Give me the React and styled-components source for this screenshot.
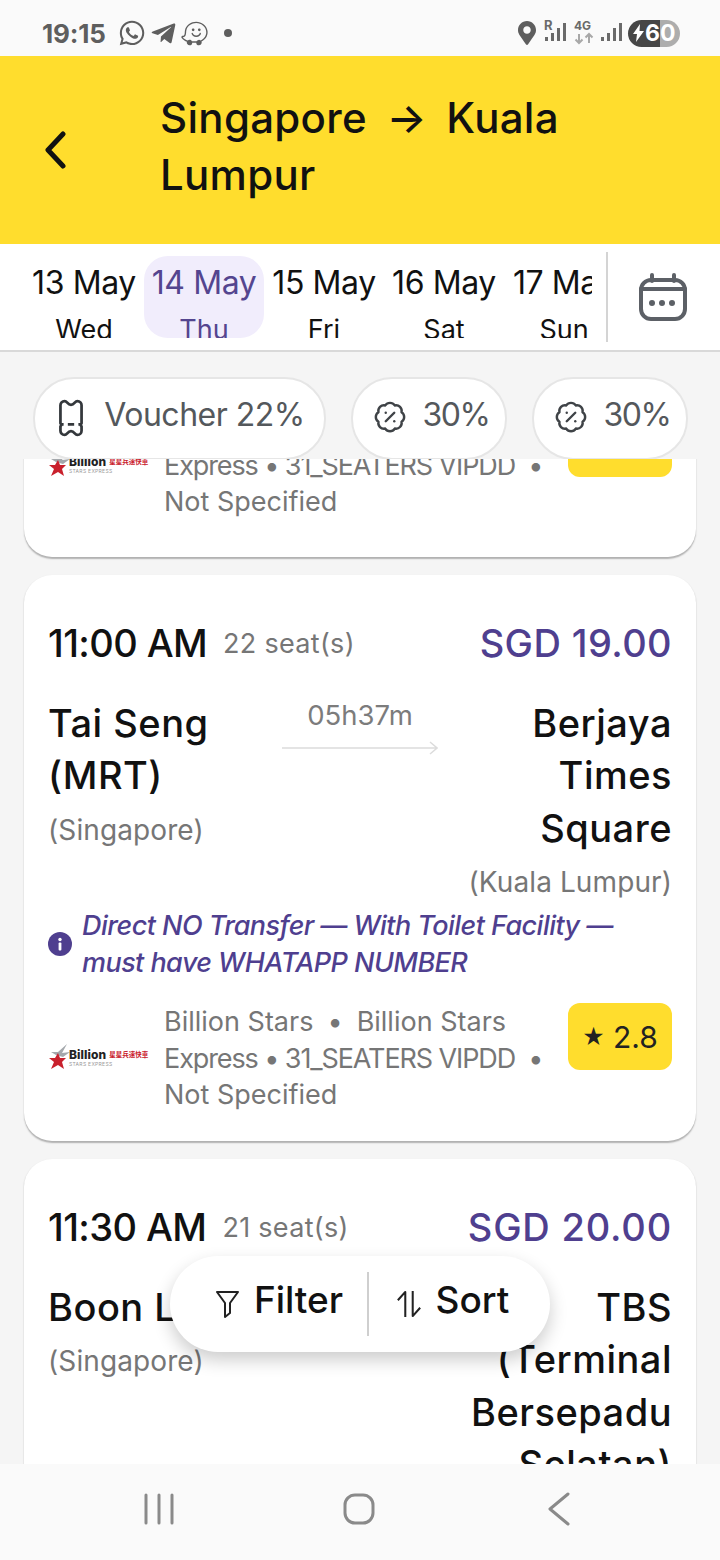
import React from "react";
import styled, { createGlobalStyle } from "styled-components";
import { FaWhatsapp, FaTelegramPlane, FaWaze, FaMapMarkerAlt } from "react-icons/fa";
import { BadgePercent } from "lucide-react";

const Global = createGlobalStyle`
  html, body { margin: 0; padding: 0; background: #f5f5f5; }
  * { box-sizing: border-box; }
  body { font-family: Inter, "Noto Sans", "Noto Sans CJK SC", sans-serif; }
`;

const Screen = styled.div`
  position: relative; width: 720px; height: 1560px; display: flex; flex-direction: column;
  overflow: hidden; background: #f5f5f5;
`;
const StatusBar = styled.div`
  height: 56px; flex: none; background: #fafafa; display: flex; align-items: center;
  justify-content: space-between; padding: 10px 40px 0 42px; color: #5e5e5e;
`;
const StatusGroup = styled.div`display: flex; align-items: center; gap: ${p => p.$gap || 4}px;`;
const Clock = styled.span`font-size: 26px; font-weight: 700; margin-right: 8px; letter-spacing: -0.2px;`;
const Dot = styled.span`width: 8px; height: 8px; border-radius: 50%; background: #5e5e5e; margin-left: 12px;`;
const Signal = styled.div`position: relative; width: ${p => p.$w || 24}px; height: 28px;`;
const SignalLabel = styled.span`
  position: absolute; left: ${p => p.$left}px; top: ${p => p.$top}px; font-size: ${p => p.$size}px; font-weight: 700;
  line-height: 1; color: #6a6a6a;
`;
const Battery = styled.div`
  width: 52px; height: 27px; border-radius: 14px; display: flex; align-items: center;
  padding-left: 5px; gap: 1px; color: #fff; font-size: 23px; font-weight: 700;
  background: linear-gradient(90deg, #464646 0 32px, #adadad 32px 100%);
`;

const Header = styled.header`
  height: 188px; flex: none; background: #ffdd2d; display: flex; align-items: center; padding: 0 40px 0 45px;
`;
const Back = styled.svg`width: 22px; height: 38px; flex: none; margin-right: 93px;`;
const Title = styled.h1`
  margin: 0 0 9px; font-size: 42px; line-height: 57px; font-weight: 500; color: #111; letter-spacing: 0.3px;
  word-spacing: 8px; width: 460px;
`;

const DateStrip = styled.div`
  height: 108px; flex: none; background: #fff; border-bottom: 2px solid #d9d9d9; display: flex; padding-left: 24px;
`;
const DateScroll = styled.div`width: 568px; display: flex; overflow: hidden; padding-top: 12px; height: 94px; flex: none;`;
const DateItem = styled.div`
  width: 120px; height: 82px; flex: none; overflow: hidden; border-radius: 24px; text-align: center;
  background: ${p => (p.$active ? "#f1edfc" : "transparent")};
  color: ${p => (p.$active ? "#54458f" : "#111")}; white-space: nowrap; padding-top: 7px;
`;
const DateNum = styled.div`font-size: 32px; line-height: 40px; letter-spacing: -0.4px;`;
const DateDay = styled.div`font-size: 27px; line-height: 30px; margin-top: 12px;`;
const Divider = styled.div`width: 2px; height: 90px; background: #d4d4d4; margin: 8px 0 0 14px;`;
const CalendarWrap = styled.div`flex: 1; display: flex; align-items: center; justify-content: center; padding-right: 2px;`;

const ChipRow = styled.div`
  height: 107px; flex: none; display: flex; gap: 25px; padding: 25px 0 0 33px; background: #f5f5f5;
`;
const Chip = styled.div`
  height: 83px; width: ${p => p.$w}px; flex: none; border-radius: 41px; background: #fff; border: 2px solid #e6e6e6;
  display: flex; align-items: center; justify-content: center; gap: ${p => p.$gap}px; color: #54585c;
  font-size: 32px; padding: 0 0 9px 4px; white-space: nowrap; letter-spacing: ${p => p.$spacing}px;
`;

const List = styled.div`flex: 1; min-height: 0; overflow: hidden; padding: 0 24px; display: flex; flex-direction: column; gap: 18px;`;
const Card = styled.article`
  flex: none; background: #fff; border-radius: 28px; padding: ${p => (p.$partial ? "40px 24px 36px" : "40px 24px 27px")};
  margin-top: ${p => (p.$partial ? "-89px" : "0")}; box-shadow: 0 1.5px 1.5px rgba(0,0,0,.28);
`;
const TimeRow = styled.div`display: flex; align-items: center; height: 56px; line-height: 56px;`;
const Time = styled.span`font-size: 38px; font-weight: 500; color: #111; letter-spacing: -0.6px;`;
const Seats = styled.span`font-size: 27px; color: #767676; margin: 3px 0 0 16px; letter-spacing: 0.3px;`;
const Price = styled.span`margin-left: auto; font-size: 38px; font-weight: 500; color: #4f3f8f; letter-spacing: ${p => p.$spacing}px;`;
const Route = styled.div`display: grid; grid-template-columns: 1fr 156px 1fr; margin-top: 26px;`;
const Stop = styled.div`text-align: ${p => (p.$right ? "right" : "left")}; display: flex; flex-direction: column; align-items: ${p => (p.$right ? "flex-end" : "flex-start")};`;
const StopName = styled.div`font-size: 38px; line-height: 52.5px; font-weight: 500; color: #111; max-width: ${p => p.$max}px; letter-spacing: 0.5px;`;
const StopCity = styled.div`font-size: 28px; line-height: 40px; color: #767676; margin-top: 8px; white-space: nowrap; letter-spacing: 0.1px;`;
const Middle = styled.div`display: flex; flex-direction: column; align-items: center; color: #7c7c7c; font-size: 27.5px;`;
const Duration = styled.div`line-height: 37px; height: 37px;`;
const Arrow = styled.svg`width: 156px; height: 16px; margin-top: 6px;`;
const Note = styled.div`display: flex; align-items: center; gap: 10px; margin: 5px 0 22px 0;`;
const InfoIcon = styled.svg`width: 24px; height: 24px; flex: none;`;
const NoteText = styled.div`font-size: 27px; line-height: 37px; font-style: italic; font-weight: 500; color: #4f3f8f; width: 560px; letter-spacing: -0.55px;`;
const Operator = styled.div`display: flex; align-items: flex-start;`;
const LogoBox = styled.div`width: 100px; height: 110px; flex: none; margin-right: 16px; display: flex; align-items: center;`;
const OperatorText = styled.div`flex: 1; min-width: 0; padding-top: 1px; font-size: 27px; line-height: 36.5px; color: #767676; white-space: nowrap;`;
const Sep = styled.span`margin: 0 14px;`;
const TightLine = styled.span`letter-spacing: -1.1px;`;
const Rating = styled.div`
  width: 104px; height: 67px; border-radius: 12px; background: #ffdd2d; flex: none; display: flex; align-items: center;
  justify-content: center; gap: 8px; font-size: 30px; color: #222;
`;
const RatingStar = styled.span`font-size: 22px;`;

const Pill = styled.div`
  position: absolute; left: 170px; top: 1256px; width: 380px; height: 96px; border-radius: 48px; background: #fff;
  box-shadow: 0 8px 18px rgba(0,0,0,.2); display: flex; align-items: center; font-size: 37px; font-weight: 500; color: #111;
`;
const PillPart = styled.div`
  flex: ${p => p.$flex}; display: flex; align-items: center; justify-content: center; gap: ${p => p.$gap}px;
  padding: 0 ${p => p.$right}px 10px ${p => p.$left}px;
`;
const PillIcon = styled.svg`margin-top: 10px; flex: none;`;
const PillDivider = styled.div`width: 2px; height: 64px; background: #cfcfcf; flex: none;`;

const NavBar = styled.nav`
  height: 96px; flex: none; background: #fafafa; display: flex; align-items: center; justify-content: space-between;
  padding: 0 150px 6px 144px; position: relative; z-index: 1;
`;
const NavHome = styled.svg`margin-right: 4px;`;

const LogoMark = styled.svg`flex: none; width: 24px; height: 26px; margin-bottom: 2px;`;
const LogoWords = styled.div`display: flex; flex-direction: column; margin-left: -3px;`;
const LogoTop = styled.div`display: flex; align-items: center; white-space: nowrap;`;
const LogoWord = styled.span`font-size: 12px; line-height: 12px; font-weight: 800; color: #222; letter-spacing: 0.1px;`;
const LogoCn = styled.span`font-size: 6.5px; line-height: 12px; font-weight: 700; color: #c9202c; margin-left: 3px;`;
const LogoSub = styled.span`font-size: 5px; line-height: 6px; color: #999; letter-spacing: 0.3px; white-space: nowrap;`;
const Logo = () => (
  <LogoBox>
    <LogoMark viewBox="0 0 24 26">
      <polygon points="19,0 14,9 22,8 15,13 8,11 3,8 10,8" fill="#a4a8ac" />
      <polygon points="10,9 12,14 18,14 14,18 16,25 10,21 3,25 6,18 1,14 7,14" fill="#c9202c" />
    </LogoMark>
    <LogoWords>
      <LogoTop>
        <LogoWord>Billion</LogoWord>
        <LogoCn>星星兵速快車</LogoCn>
      </LogoTop>
      <LogoSub>STARS EXPRESS</LogoSub>
    </LogoWords>
  </LogoBox>
);

const OperatorRow = ({ rating }) => (
  <Operator>
    <Logo />
    <OperatorText>
      Billion Stars<Sep>•</Sep>Billion Stars<br />
      <TightLine>Express • 31_SEATERS VIPDD&nbsp; •</TightLine><br />
      Not Specified
    </OperatorText>
    <Rating><RatingStar>★</RatingStar>{rating}</Rating>
  </Operator>
);

const TripCard = ({ time, seats, price, priceSpacing, from, fromMax, city, to, toMax, toCity, duration, note, rating }) => (
  <Card>
    <TimeRow>
      <Time>{time}</Time>
      <Seats>{seats}</Seats>
      <Price $spacing={priceSpacing}>{price}</Price>
    </TimeRow>
    <Route>
      <Stop>
        <StopName $max={fromMax}>{from}</StopName>
        <StopCity>{city}</StopCity>
      </Stop>
      <Middle>
        <Duration>{duration}</Duration>
        <Arrow viewBox="0 0 156 16" fill="none" stroke="#dcdcdc" strokeWidth="1.5">
          <path d="M0 8H155M148 2l7 6-7 6" />
        </Arrow>
      </Middle>
      <Stop $right>
        <StopName $max={toMax}>{to}</StopName>
        <StopCity>{toCity}</StopCity>
      </Stop>
    </Route>
    {note && (
      <Note>
        <InfoIcon viewBox="0 0 24 24">
          <circle cx="12" cy="12" r="12" fill="#4f3f8f" />
          <circle cx="12" cy="7.5" r="1.7" fill="#fff" />
          <rect x="10.6" y="10.5" width="2.8" height="8" rx="1" fill="#fff" />
        </InfoIcon>
        <NoteText>{note}</NoteText>
      </Note>
    )}
    {rating && <OperatorRow rating={rating} />}
  </Card>
);

const Bars = () => (
  <svg width="24" height="28" viewBox="0 0 24 28" fill="#6a6a6a">
    <rect x="1" y="18" width="3" height="4" /><rect x="7" y="14" width="3" height="8" />
    <rect x="13" y="9" width="3" height="13" /><rect x="19" y="4" width="3" height="18" />
  </svg>
);

const dates = [["13 May", "Wed"], ["14 May", "Thu"], ["15 May", "Fri"], ["16 May", "Sat"], ["17 May", "Sun"]];

export default function App() {
  return (
    <Screen>
      <Global />
      <StatusBar>
        <StatusGroup $gap={4}>
          <Clock>19:15</Clock>
          <FaWhatsapp size={28} />
          <FaTelegramPlane size={27} />
          <FaWaze size={27} />
          <Dot />
        </StatusGroup>
        <StatusGroup $gap={4}>
          <FaMapMarkerAlt size={24} style={{ marginRight: 1 }} />
          <Signal>
            <SignalLabel $left={0} $top={0} $size={13}>R</SignalLabel>
            <Bars />
          </Signal>
          <Signal>
            <SignalLabel $left={2} $top={1} $size={12}>4G</SignalLabel>
            <svg width="24" height="28" viewBox="0 0 24 28" fill="none" stroke="#a8a8a8" strokeWidth="2">
              <path d="M7 15v9M3.500 20.500L7 24l3.500-3.500M17 24v-9M13.500 18.500L17 15l3.500 3.500" />
            </svg>
          </Signal>
          <Signal>
            <Bars />
          </Signal>
          <Battery>
            <svg width="11" height="18" viewBox="0 0 11 18" fill="#fff" style={{ flex: "none" }}>
              <path d="M7 0L0 10h4l-1 8 8-11H6.500z" />
            </svg>
            60
          </Battery>
        </StatusGroup>
      </StatusBar>

      <Header>
        <Back viewBox="0 0 22 38" fill="none" stroke="#111" strokeWidth="5" strokeLinecap="round" strokeLinejoin="round">
          <path d="M18 3L3 19l15 16" />
        </Back>
        <Title>Singapore → Kuala Lumpur</Title>
      </Header>

      <DateStrip>
        <DateScroll>
          {dates.map(([d, w], i) => (
            <DateItem key={d} $active={i === 1}>
              <DateNum>{d}</DateNum>
              <DateDay>{w}</DateDay>
            </DateItem>
          ))}
        </DateScroll>
        <Divider />
        <CalendarWrap>
          <svg width="48" height="48" viewBox="0 0 48 48" fill="none" stroke="#5c6066" strokeWidth="4" strokeLinecap="round">
            <rect x="2" y="7" width="44" height="39" rx="10" />
            <path d="M2 16H46M13 2v6M35 2v6" />
            <g fill="#5c6066" stroke="none">
              <circle cx="13" cy="30" r="3" /><circle cx="23" cy="30" r="3" /><circle cx="33" cy="30" r="3" />
            </g>
          </svg>
        </CalendarWrap>
      </DateStrip>

      <ChipRow>
        <Chip $w={293} $gap={20} $spacing={-0.5}>
          <svg width="26" height="38" viewBox="0 0 24 36" fill="none" stroke="#34383c" strokeWidth="2.600" strokeLinejoin="round" style={{ marginTop: 8 }}>
            <path d="M6 2c2.500 0 2.500 3.500 6 3.500S15.500 2 18 2c2.500 0 4 2 4 4v17c-1 1-1 2 0 3v4c0 2-1.500 4-4 4-2.500 0-2.500-3.500-6-3.500S8.500 34 6 34c-2.500 0-4-2-4-4v-4c1-1 1-2 0-3V6c0-2 1.500-4 4-4z" />
            <path d="M2 24h3M9 24h6M19 24h3" />
          </svg>
          Voucher 22%
        </Chip>
        <Chip $w={156} $gap={16} $spacing={-1.5}>
          <BadgePercent size={34} strokeWidth={1.700} color="#3f4347" style={{ marginTop: 6 }} />
          30%
        </Chip>
        <Chip $w={156} $gap={16} $spacing={-1.5}>
          <BadgePercent size={34} strokeWidth={1.700} color="#3f4347" style={{ marginTop: 6 }} />
          30%
        </Chip>
      </ChipRow>

      <List>
        <Card $partial>
          <OperatorRow rating="2.8" />
        </Card>
        <TripCard
          time="11:00 AM" seats="22 seat(s)" price="SGD 19.00" priceSpacing={0.4}
          from="Tai Seng (MRT)" fromMax={180} city="(Singapore)"
          to="Berjaya Times Square" toMax={160} toCity="(Kuala Lumpur)"
          duration="05h37m"
          note="Direct NO Transfer — With Toilet Facility — must have WHATAPP NUMBER"
          rating="2.8"
        />
        <TripCard
          time="11:30 AM" seats="21 seat(s)" price="SGD 20.00" priceSpacing={0.8}
          from="Boon Lay" fromMax={230} city="(Singapore)"
          to="TBS (Terminal Bersepadu Selatan)" toMax={210} toCity="(Johor Bahru)"
          duration=""
        />
      </List>

      <Pill>
        <PillPart $flex="194" $gap={14} $left={21} $right={0}>
          <PillIcon width="25" height="28" viewBox="0 0 25 28" fill="none" stroke="#222" strokeWidth="2" strokeLinejoin="round">
            <path d="M2 2h21l-8 11v10l-5 4V13z" />
          </PillIcon>
          Filter
        </PillPart>
        <PillDivider />
        <PillPart $flex="184" $gap={14} $left={0} $right={14}>
          <PillIcon width="26" height="30" viewBox="0 0 28 30" fill="none" stroke="#222" strokeWidth="2.200" strokeLinejoin="round">
            <path d="M10 29V2L2 11M18 1v27l8-9" />
          </PillIcon>
          Sort
        </PillPart>
      </Pill>

      <NavBar>
        <svg width="30" height="32" viewBox="0 0 30 32" stroke="#8a8a8a" strokeWidth="3" strokeLinecap="round">
          <path d="M2 2v28M15 2v28M28 2v28" />
        </svg>
        <NavHome width="32" height="32" viewBox="0 0 32 32" fill="none" stroke="#8a8a8a" strokeWidth="3">
          <rect x="2" y="2" width="28" height="28" rx="10" />
        </NavHome>
        <svg width="22" height="34" viewBox="0 0 22 34" fill="none" stroke="#8a8a8a" strokeWidth="3" strokeLinecap="round" strokeLinejoin="round">
          <path d="M20 2L2 17l18 15" />
        </svg>
      </NavBar>
    </Screen>
  );
}
